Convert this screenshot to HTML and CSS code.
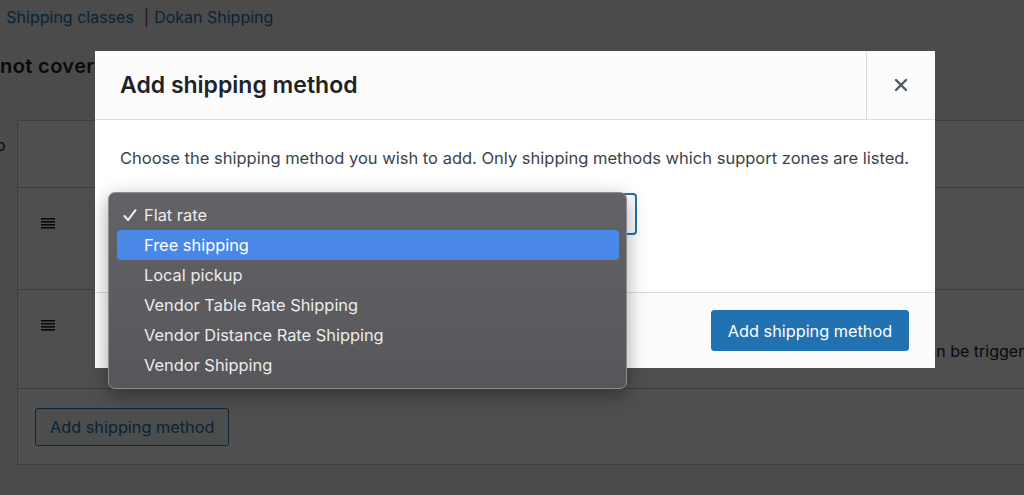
FILE: index.html
```html
<!DOCTYPE html>
<html lang="en">

<head>
    <meta charset="UTF-8">
    <title>Shipping zones</title>
    <link rel="stylesheet" href="styles.css">
</head>

<body>

    <div class="page">
        <div class="subsubsub">
            <span class="sep">|</span><a href="#">Shipping classes</a>
            <span class="sep">|</span><a href="#">Dokan Shipping</a>
        </div>

        <h2 class="zone-title">not covered by your other zones</h2>

        <div class="zone-table">
            <div class="zone-row zone-head">
                <span class="tiny">o</span>
            </div>
            <div class="zone-row method-row">
                <svg class="handle" width="14" height="11" viewBox="0 0 14 11">
                    <rect x="0" y="0" width="14" height="1.6" fill="#1e1e1e" />
                    <rect x="0" y="3" width="14" height="1.6" fill="#1e1e1e" />
                    <rect x="0" y="6" width="14" height="1.6" fill="#1e1e1e" />
                    <rect x="0" y="9" width="14" height="1.6" fill="#1e1e1e" />
                </svg>
            </div>
            <div class="zone-row method-row second">
                <svg class="handle" width="14" height="11" viewBox="0 0 14 11">
                    <rect x="0" y="0" width="14" height="1.6" fill="#1e1e1e" />
                    <rect x="0" y="3" width="14" height="1.6" fill="#1e1e1e" />
                    <rect x="0" y="6" width="14" height="1.6" fill="#1e1e1e" />
                    <rect x="0" y="9" width="14" height="1.6" fill="#1e1e1e" />
                </svg>
                <span class="desc">can be triggered by coupons and minimum spend.</span>
            </div>
            <div class="zone-row zone-foot">
                <button class="btn-outline">Add shipping method</button>
            </div>
        </div>
    </div>

    <div class="backdrop"></div>

    <div class="modal">
        <div class="modal-header">
            <h1>Add shipping method</h1>
            <button class="modal-close">
                <svg width="14" height="14" viewBox="0 0 14 14">
                    <path d="M2 2 L12 12 M12 2 L2 12" stroke="#50575e" stroke-width="2.4" stroke-linecap="round" />
                </svg>
            </button>
        </div>
        <div class="modal-body">
            <p>Choose the shipping method you wish to add. Only shipping methods which support zones are listed.</p>
            <div class="select-box"></div>
        </div>
        <div class="modal-footer">
            <button class="btn-primary">Add shipping method</button>
        </div>
    </div>

    <ul class="popup">
        <li class="checked">
            <svg class="check" width="14" height="13" viewBox="0 0 14 13">
                <path d="M1.5 7 L5 11.2 L12.5 1.2" fill="none" stroke="#f0f0f0" stroke-width="2" stroke-linecap="round" stroke-linejoin="round" />
            </svg>Flat rate
        </li>
        <li class="active">Free shipping</li>
        <li>Local pickup</li>
        <li>Vendor Table Rate Shipping</li>
        <li>Vendor Distance Rate Shipping</li>
        <li>Vendor Shipping</li>
    </ul>

</body>

</html>
```

FILE: styles.css
```css
body {
    margin: 0;
    background-color: #f0f0f1;
    font-family: Inter, "Open Sans", sans-serif;
    font-size: 16px;
    color: #1d2327;
    overflow: hidden;
    height: 495px;
}

.page {
    position: relative;
}

.subsubsub {
    display: flex;
    align-items: center;
    height: 34px;
    margin-left: -4px;
    white-space: nowrap;
}

.subsubsub a {
    color: #2271b1;
    text-decoration: none;
}

.subsubsub .sep {
    color: #50575e;
    margin: 0 5px 0 0;
}

.subsubsub a + .sep {
    margin-left: 10px;
}

.zone-title {
    margin: 0;
    padding-top: 20px;
    height: 86px;
    box-sizing: border-box;
    font-size: 20px;
    letter-spacing: 0.4px;
    font-weight: 600;
    white-space: nowrap;
}

.zone-table {
    margin-left: 17px;
    width: 1100px;
    background-color: #fff;
    border: 1px solid #c3c4c7;
}

.zone-row {
    position: relative;
    border-bottom: 1px solid #c3c4c7;
    box-sizing: border-box;
}

.zone-head {
    height: 67px;
}

.zone-head .tiny {
    position: absolute;
    left: -22px;
    top: 14px;
    font-size: 16px;
}

.method-row {
    height: 102px;
    padding: 30px 0 0 23px;
}

.method-row.second {
    height: 99px;
}

.handle {
    display: block;
}

.method-row .desc {
    position: absolute;
    left: 900px;
    top: 51px;
    white-space: nowrap;
    color: #1d2327;
}

.zone-foot {
    height: 75px;
    border-bottom: none;
    padding: 19px 0 0 17px;
}

.btn-outline {
    font-family: inherit;
    font-size: 16.3px;
    color: #2271b1;
    background: #f6f7f7;
    border: 1px solid #2271b1;
    border-radius: 3px;
    height: 38px;
    padding: 0 14px;
}

.backdrop {
    position: absolute;
    inset: 0;
    background-color: rgba(0, 0, 0, 0.69);
}

.modal {
    position: absolute;
    left: 95px;
    top: 51px;
    width: 840px;
    height: 317px;
    background-color: #fff;
    display: flex;
    flex-direction: column;
}

.modal-header {
    display: flex;
    align-items: center;
    height: 69px;
    background-color: #fcfcfc;
    border-bottom: 1px solid #dcdcde;
    box-sizing: border-box;
}

.modal-header h1 {
    flex: 1;
    margin: 0;
    padding-left: 25px;
    font-size: 23px;
    font-weight: 600;
    color: #1d2327;
}

.modal-close {
    width: 69px;
    height: 100%;
    border: none;
    border-left: 1px solid #dcdcde;
    background: transparent;
    display: flex;
    align-items: center;
    justify-content: center;
}

.modal-body {
    flex: 1;
    padding: 28px 25px 0 25px;
    color: #3c434a;
}

.modal-body p {
    margin: 0 0 25px 0;
    font-size: 16.5px;
    line-height: 20px;
    white-space: nowrap;
}

.select-box {
    width: 517px;
    height: 42px;
    box-sizing: border-box;
    border: 2px solid #2271b1;
    border-radius: 4px;
}

.modal-footer {
    height: 76px;
    background-color: #fcfcfc;
    border-top: 1px solid #dcdcde;
    box-sizing: border-box;
    display: flex;
    align-items: center;
    justify-content: flex-end;
    padding-right: 26px;
}

.btn-primary {
    font-family: inherit;
    font-size: 16.3px;
    color: #fff;
    background-color: #2271b1;
    border: 1px solid #2271b1;
    border-radius: 3px;
    height: 41px;
    width: 198px;
    padding: 0;
}

.popup {
    position: absolute;
    left: 108px;
    top: 192px;
    width: 519px;
    margin: 0;
    padding: 7px 7px 8px 8px;
    box-sizing: border-box;
    list-style: none;
    background: linear-gradient(#636267, #57565b);
    border: 1px solid #8d8c90;
    border-radius: 7px;
    box-shadow: 0 6px 20px rgba(0, 0, 0, 0.35);
    color: #ececec;
    font-size: 16.4px;
}

.popup li {
    position: relative;
    height: 30px;
    line-height: 30px;
    padding-left: 27px;
    border-radius: 4px;
}

.popup li.active {
    background-color: #4a88e8;
    color: #fff;
}

.popup .check {
    position: absolute;
    left: 6px;
    top: 9px;
}
```
